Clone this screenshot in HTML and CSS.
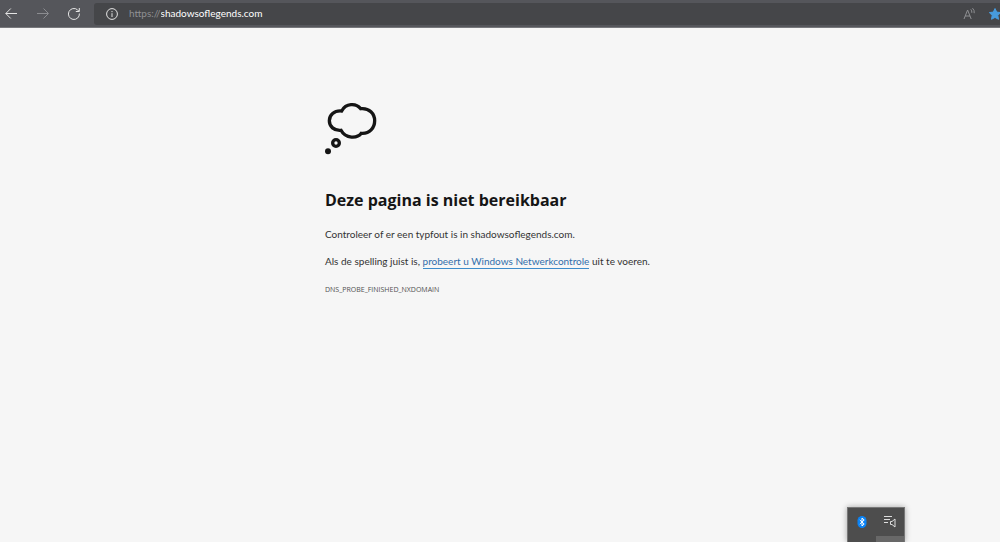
FILE: index.html
```html
<!DOCTYPE html>
<html lang="nl">
<head>
<meta charset="utf-8">
<meta name="viewport" content="width=device-width, initial-scale=1">
<title>shadowsoflegends.com</title>
<link rel="stylesheet" href="styles.css">
</head>
<body>
<header class="toolbar">
  <nav class="nav">
    <button class="icon-button" type="button" aria-label="Terug">
      <svg width="14" height="14" viewBox="0 0 14 14"><path d="M12 6.500H.800M5.800 1.500l-5 5 5 5"/></svg>
    </button>
    <button class="icon-button dim" type="button" aria-label="Vooruit">
      <svg width="14" height="14" viewBox="0 0 14 14"><path d="M1 6.500h11M7.500 1.500l5 5-5 5"/></svg>
    </button>
    <button class="icon-button" type="button" aria-label="Vernieuwen">
      <svg width="14" height="14" viewBox="0 0 14 14"><path d="M12.400 6.500A5.500 5.500 0 1 1 10.500 2.800L12 4.300M12.300 1v3.500H8.800"/></svg>
    </button>
  </nav>
  <div class="address">
    <button class="icon-button" type="button" aria-label="Site-informatie">
      <svg width="14" height="14" viewBox="0 0 14 14"><circle cx="7" cy="7" r="5.400"/><path d="M7 6.200v3.800M7 4v1.200"/></svg>
    </button>
    <div class="url">
      <label for="url">https://</label>
      <input id="url" type="text" value="shadowsoflegends.com" spellcheck="false">
    </div>
    <button class="icon-button read" type="button" aria-label="Hardop voorlezen">
      <svg width="14" height="14" viewBox="0 0 14 14"><path d="M2 12 5.600 3l3.600 9M3.200 9H8M8.800 2.400q1.300 1.200 1 3.400M10.500 1.200q2.200 2 1.700 5"/></svg>
    </button>
    <button class="icon-button star" type="button" aria-label="Favoriet">
      <svg width="14" height="14" viewBox="0 0 14 14"><path d="m7 1.500 1.700 3.600 4 .5-2.900 2.700.7 4L7 10.400l-3.500 1.900.7-4L1.300 5.600l4-.5z"/></svg>
    </button>
  </div>
</header>
<main class="error">
  <svg class="cloud" width="52" height="52" viewBox="30 24 156 156" aria-hidden="true">
    <path d="M80 48C57 46 43 60 43 77S57 108 78 106C92 132 127 131 139 115C164 117 179 98 179 77S163 38 137 41C122 24 93 24 80 48Z"/>
    <circle cx="63" cy="144" r="10"/>
    <circle class="dot" cx="39" cy="169" r="9"/>
  </svg>
  <h1 class="title">Deze pagina is niet bereikbaar</h1>
  <p class="text">Controleer of er een typfout is in shadowsoflegends.com.</p>
  <p class="text">Als de spelling juist is, <a class="link" href="#">probeert u Windows Netwerkcontrole</a> uit te voeren.</p>
  <p class="code">DNS_PROBE_FINISHED_NXDOMAIN</p>
</main>
<aside class="tray">
  <button class="tray-button" type="button" aria-label="Bluetooth">
    <svg width="12" height="14" viewBox="0 0 12 14"><rect class="bt" x="1.500" y="1" width="9" height="12" rx="4.500"/><path class="rune" d="m3.800 5 4.400 4L6 11V3l2.200 2-4.400 4"/></svg>
  </button>
  <button class="tray-button" type="button" aria-label="Geluid">
    <svg width="14" height="14" viewBox="0 0 14 14"><path d="M1 1.500h8M1 4.500h6M1 7.500h4M7.500 6.500h1.500l3-2.500v8l-3-2.500h-1.500z"/></svg>
  </button>
  <span class="hover-strip"></span>
</aside>
</body>
</html>
```
FILE: styles.css
```css
body {
  margin: 0;
  min-height: 100vh;
  background: #f6f6f6;
  color: #333;
  font-family: Lato, "Open Sans", sans-serif;
  overflow: hidden;
}

svg {
  display: block;
  fill: none;
  stroke: currentColor;
}

button {
  padding: 0;
  border: 0;
  background: none;
  color: inherit;
}

.toolbar {
  display: flex;
  align-items: center;
  box-sizing: border-box;
  height: 28px;
  padding-left: 5px;
  border-bottom: 1px solid #77787c;
  background: #55565b;
  color: #e4e4e4;
}

.nav {
  display: flex;
  gap: 17px;
  margin-right: 13px;
}

.icon-button {
  flex: none;
}

.dim {
  color: #8b8c90;
}

.address {
  display: flex;
  flex: 1;
  align-items: center;
  height: 22px;
  padding-left: 11px;
  border-radius: 3px 0 0 3px;
  background: #454649;
}

.url {
  display: flex;
  flex: 1;
  align-items: center;
  margin-left: 10px;
  padding-bottom: 2px;
  color: #8f9093;
  font-size: 10px;
  line-height: 16px;
}

.url input {
  flex: 1;
  min-width: 0;
  padding: 0;
  border: 0;
  outline: 0;
  background: none;
  color: #fff;
  font: inherit;
}

.read {
  margin-right: 12px;
  color: #8f9093;
}

.star {
  margin-right: -2px;
  color: #479bdc;
}

.star path {
  fill: currentColor;
}

.error {
  padding: 75px 24px 0 325px;
}

.cloud {
  color: #151515;
  stroke-width: 10;
}

.dot {
  fill: currentColor;
  stroke: none;
}

.title {
  margin: 33px 0 0;
  color: #151515;
  font-family: "Open Sans", "Noto Sans", sans-serif;
  font-size: 16px;
  font-weight: 700;
  line-height: 24px;
}

.text {
  margin: 14px 0 0;
  font-size: 10px;
  line-height: 16px;
}

.text + .text {
  margin-top: 11px;
}

.link {
  padding-bottom: 1px;
  border-bottom: 1px solid #3d8ccb;
  color: #326fab;
  text-decoration: none;
}

.code {
  margin: 15px 0 0;
  color: #505050;
  font-family: "Open Sans", "Noto Sans", sans-serif;
  font-size: 7px;
  line-height: 12px;
}

.tray {
  position: fixed;
  right: 95px;
  bottom: 0;
  display: grid;
  grid-template-columns: 28px 28px;
  grid-template-rows: 28px 6px;
  border: 1px solid #777;
  border-bottom: 0;
  background: #4d4d4d;
  box-shadow: 0 0 6px #0005;
  color: #dedede;
}

.tray-button {
  display: grid;
  place-items: center;
}

.bt {
  fill: #0b83f5;
  stroke: none;
}

.rune {
  stroke: #fff;
}

.hover-strip {
  grid-column: 2;
  background: #686868;
}
```
